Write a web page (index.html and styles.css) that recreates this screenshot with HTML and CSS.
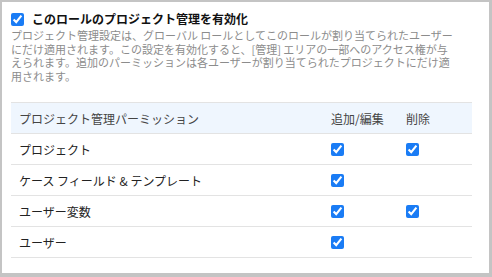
FILE: index.html
```html
<!DOCTYPE html>
<html lang="ja">
<head>
    <meta charset="UTF-8">
    <meta name="viewport" content="width=device-width, initial-scale=1.0">
    <title>プロジェクト管理</title>
    <link rel="stylesheet" href="styles.css">
</head>
<body>
    <div class="panel">
        <label class="enable-row">
            <input type="checkbox" checked> このロールのプロジェクト管理を有効化
        </label>
        <p class="description">プロジェクト管理設定は、グローバル ロールとしてこのロールが割り当てられたユーザー<br>にだけ適用されます。この設定を有効化すると、[管理] エリアの一部へのアクセス権が与<br>えられます。追加のパーミッションは各ユーザーが割り当てられたプロジェクトにだけ適<br>用されます。</p>

        <table class="perm-table">
            <thead>
                <tr>
                    <th>プロジェクト管理パーミッション</th>
                    <th class="col-edit">追加/編集</th>
                    <th class="col-delete">削除</th>
                </tr>
            </thead>
            <tbody>
                <tr>
                    <td>プロジェクト</td>
                    <td><input type="checkbox" checked></td>
                    <td><input type="checkbox" checked></td>
                </tr>
                <tr>
                    <td>ケース フィールド &amp; テンプレート</td>
                    <td><input type="checkbox" checked></td>
                    <td></td>
                </tr>
                <tr>
                    <td>ユーザー変数</td>
                    <td><input type="checkbox" checked></td>
                    <td><input type="checkbox" checked></td>
                </tr>
                <tr>
                    <td>ユーザー</td>
                    <td><input type="checkbox" checked></td>
                    <td></td>
                </tr>
            </tbody>
        </table>
    </div>
</body>
</html>
```

FILE: styles.css
```css
body {
    margin: 0;
    padding: 0;
    background-color: #c4c4c4;
    font-family: "Noto Sans CJK JP", "Noto Sans", sans-serif;
}

.panel {
    margin: 2px 3px 4px 2px;
    height: 271px;
    box-sizing: border-box;
    padding: 9px 17px 0 9px;
    background-color: #fff;
}

input[type="checkbox"] {
    width: 13px;
    height: 13px;
    margin: 0;
    accent-color: #1a7cf5;
}

.enable-row {
    display: flex;
    align-items: center;
    gap: 8px;
    font-size: 12px;
    font-weight: bold;
    line-height: 16px;
    color: #111;
}

.description {
    margin: 2px 0 0 0;
    font-size: 11px;
    line-height: 13.5px;
    color: #8c8c8c;
    white-space: nowrap;
}

.perm-table {
    width: 100%;
    margin-top: 19px;
    border-collapse: collapse;
    font-size: 12px;
    color: #222;
}

.perm-table th,
.perm-table td {
    height: 30px;
    padding: 0 8px;
    border-top: 1px solid #e3e3e3;
    border-bottom: 1px solid #e3e3e3;
    text-align: left;
    vertical-align: middle;
}

.perm-table th {
    font-weight: normal;
    color: #444;
    background-color: #eff6fe;
}

.perm-table td input {
    display: block;
}

.col-edit {
    width: 59px;
}

.col-delete {
    width: 58px;
}
```
